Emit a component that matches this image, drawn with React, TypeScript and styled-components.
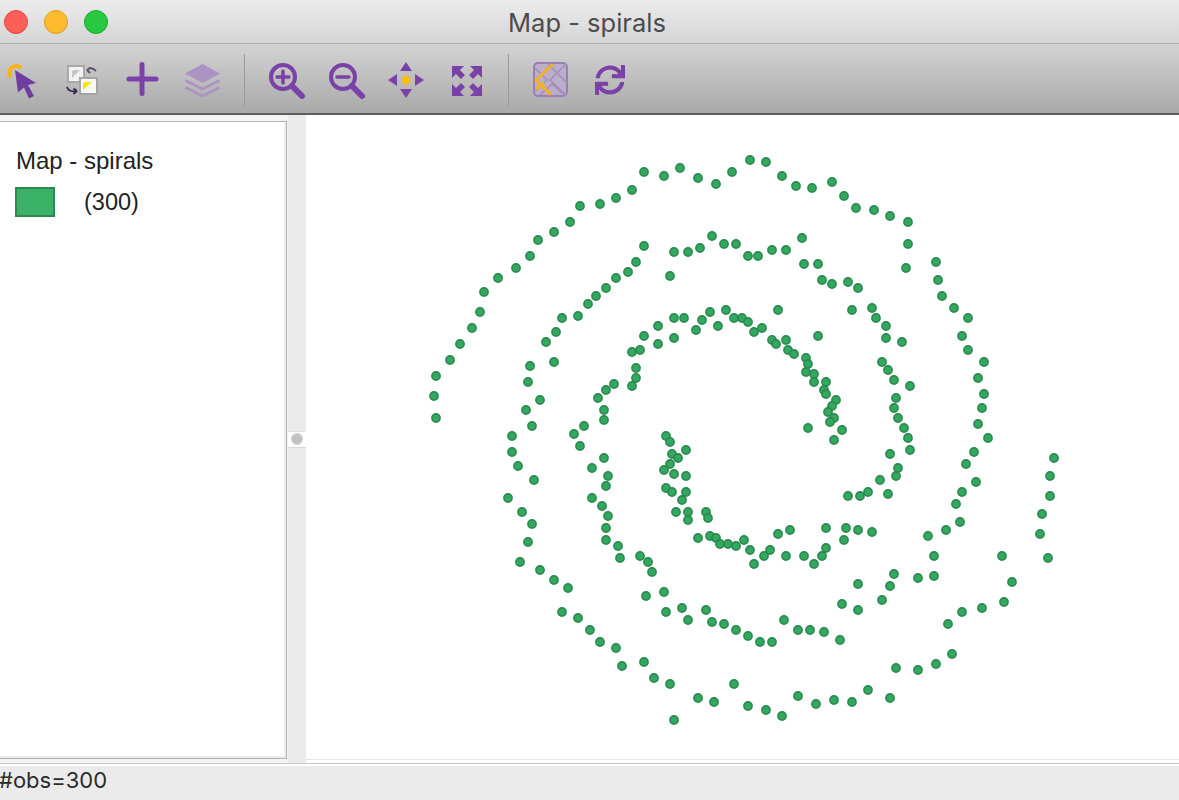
import React from "react";
import styled, { createGlobalStyle } from "styled-components";
import { FaSync } from "react-icons/fa";

const PURPLE = "#7a42a8";

const GlobalStyle = createGlobalStyle`
  html, body {
    margin: 0;
    padding: 0;
    background: #fff;
    overflow: hidden;
  }
`;

const Window = styled.div`
  width: 1179px;
  height: 800px;
  display: flex;
  flex-direction: column;
  overflow: hidden;
  font-family: "Liberation Sans", Arial, sans-serif;
`;

const TitleBar = styled.div`
  height: 44px;
  flex: none;
  position: relative;
  display: flex;
  align-items: center;
  justify-content: center;
  padding: 1px 5px 0 0;
  box-sizing: border-box;
  background: linear-gradient(#ececec, #d5d5d5);
  border-bottom: 1px solid #b1b1b1;
`;

const Lights = styled.div`
  position: absolute;
  left: 4px;
  top: 10px;
  display: flex;
  gap: 16px;
`;

const Light = styled.span<{ $fill: string; $edge: string }>`
  width: 24px;
  height: 24px;
  box-sizing: border-box;
  border-radius: 50%;
  background: ${(p) => p.$fill};
  border: 1px solid ${(p) => p.$edge};
`;

const Title = styled.div`
  font-family: "Inter", "Liberation Sans", sans-serif;
  font-size: 25.5px;
  color: #4c4c4c;
`;

const Toolbar = styled.div`
  height: 71px;
  flex: none;
  box-sizing: border-box;
  display: flex;
  align-items: center;
  padding-top: 3px;
  background: linear-gradient(#d3d3d3, #a9a9a9);
  border-bottom: 2px solid #5c5c5c;
`;

const ToolButton = styled.div`
  width: 60px;
  height: 48px;
  flex: none;
  display: flex;
  align-items: center;
  justify-content: center;
  &:first-child {
    margin-left: -8px;
  }
`;

const ToolSeparator = styled.div`
  width: 24px;
  height: 52px;
  flex: none;
  box-sizing: border-box;
  padding-left: 1px;
  display: flex;
  justify-content: center;
  &::before {
    content: "";
    width: 1.5px;
    background: #9a9a9a;
  }
`;

const Body = styled.div`
  height: 648px;
  flex: none;
  display: flex;
`;

const LegendPane = styled.div`
  width: 288px;
  flex: none;
  box-sizing: border-box;
  padding: 6px 1px 4px 0;
  background: #f4f4f4;
`;

const LegendBox = styled.div`
  height: 100%;
  box-sizing: border-box;
  margin-left: -2px;
  padding: 25px 0 0 17px;
  background: #fff;
  border: 1px solid #b2b2b2;
  box-shadow: inset -2px -2px 0 #ececec;
`;

const LegendTitle = styled.div`
  font-size: 24px;
  line-height: 28px;
  color: #222;
`;

const LegendRow = styled.div`
  display: flex;
  align-items: center;
  gap: 29px;
  margin-top: 12px;
  margin-left: -1px;
  font-size: 23.5px;
  color: #222;
`;

const Swatch = styled.span`
  width: 40px;
  height: 30px;
  box-sizing: border-box;
  background: #3bb067;
  border: 2px solid #2a8a50;
`;

const Sash = styled.div`
  width: 18px;
  flex: none;
  display: flex;
  align-items: center;
  background: #ebebeb;
`;

const SashGrip = styled.div`
  width: 100%;
  height: 17px;
  box-sizing: border-box;
  display: flex;
  align-items: center;
  justify-content: center;
  background: #fff;
  border-top: 1px solid #e2e2e2;
  border-bottom: 1px solid #d8d8d8;
  &::before {
    content: "";
    width: 12px;
    height: 12px;
    border-radius: 50%;
    background: #c2c2c2;
    border: 1px solid #d4d4d4;
    box-sizing: border-box;
  }
`;

const Canvas = styled.div`
  flex: 1;
  background: #fff;
  border-bottom: 3px solid #fff;
  box-shadow: inset 0 -4px 0 -3px #e6e6e6;
`;

const MapSvg = styled.svg`
  display: block;
  width: 873px;
  height: 645px;
`;

const StatusBar = styled.div`
  flex: 1;
  box-sizing: border-box;
  padding: 0 0 4px 0;
  display: flex;
  align-items: center;
  background: #ebebeb;
  border-top: 1px solid #c9c9c9;
  box-shadow: inset 0 2px 0 #fff;
  font-family: "Inter", "Liberation Sans", sans-serif;
  font-size: 22px;
  color: #2b2b2b;
  text-indent: -1px;
`;

const points: [number, number][] = [
  // outer arm
  [436, 376], [434, 396], [436, 418], [450, 360], [460, 344], [472, 328], [480, 312], [484, 292],
  [498, 278], [516, 268], [530, 256], [538, 240], [554, 232], [570, 222], [580, 206], [600, 204],
  [616, 198], [632, 190], [644, 172], [664, 176], [680, 168], [698, 178], [716, 184], [732, 172],
  [750, 160], [766, 162], [782, 176], [796, 186], [812, 188], [832, 182], [844, 196], [856, 208],
  [874, 210], [890, 216], [908, 222], [908, 244], [906, 268], [936, 262], [938, 280], [942, 296],
  [954, 308], [968, 318], [962, 336], [968, 350], [984, 362], [978, 378], [984, 394], [982, 408],
  [978, 424], [988, 438], [974, 452], [966, 464], [976, 482], [962, 492], [956, 504], [960, 522],
  [946, 530], [928, 536], [934, 556], [934, 576], [918, 578], [894, 574], [890, 586], [882, 600],
  [858, 584], [858, 610], [842, 604],
  // far right and bottom arm
  [1054, 458], [1050, 476], [1050, 496], [1042, 514], [1040, 534], [1048, 558], [1002, 556],
  [1012, 582], [1004, 602], [982, 608], [962, 612], [948, 624], [952, 654], [936, 664], [918, 670],
  [896, 668], [868, 690], [890, 698], [852, 702], [834, 700], [816, 704], [798, 696], [782, 716],
  [766, 710], [748, 706], [734, 684], [714, 702], [698, 698], [674, 720], [670, 684], [654, 678],
  [644, 662], [622, 666], [616, 648], [600, 642], [590, 630], [578, 618], [562, 612],
  // second arm
  [644, 246], [636, 262], [628, 272], [616, 278], [606, 288], [596, 296], [588, 304], [578, 316],
  [562, 318], [556, 332], [546, 342], [554, 362], [530, 366], [528, 382], [540, 400], [526, 410],
  [532, 426], [512, 436], [512, 452], [518, 466], [534, 480], [508, 498], [522, 512], [532, 524],
  [528, 542], [520, 562], [540, 570], [554, 580], [568, 588],
  [670, 276], [674, 252], [688, 252], [700, 248], [712, 236], [724, 244], [736, 244], [748, 256],
  [758, 256], [772, 250], [786, 250], [802, 238], [804, 264], [818, 264], [822, 280], [832, 284],
  [848, 282], [858, 288], [852, 310], [872, 308], [876, 318], [886, 326], [886, 338], [902, 342],
  [882, 362], [888, 370], [894, 380], [910, 386], [896, 398], [894, 408], [898, 418], [904, 428],
  [908, 438], [910, 450], [890, 454], [898, 468], [896, 476], [880, 480], [868, 492], [860, 496],
  [848, 496], [888, 494],
  // third arm
  [632, 352], [640, 350], [636, 368], [636, 378], [632, 386], [614, 384], [606, 390], [598, 398],
  [604, 410], [604, 420], [584, 426], [574, 434], [580, 446], [604, 458], [592, 468], [608, 476],
  [606, 486], [592, 498], [602, 506], [608, 516], [606, 528], [606, 540], [618, 546], [620, 558],
  [640, 556], [648, 562], [652, 572], [664, 592], [646, 596], [666, 612], [682, 608], [688, 620],
  [706, 610], [712, 622], [724, 624], [736, 630], [748, 636], [760, 642], [772, 642], [784, 620],
  [798, 630], [810, 630], [824, 632], [840, 640],
  [674, 318], [684, 318], [658, 326], [644, 336], [674, 338], [658, 344], [696, 330], [702, 320],
  [710, 312], [718, 326], [726, 310], [734, 318], [742, 318], [748, 322], [754, 332], [762, 328],
  [778, 310], [772, 340], [776, 344], [786, 340], [788, 350], [794, 354], [818, 336], [806, 358],
  [808, 364], [806, 372], [814, 374], [814, 382], [826, 382], [824, 390], [826, 394], [836, 400],
  [832, 406], [828, 412], [834, 418], [830, 422], [808, 428], [842, 430], [834, 440],
  // centre hook
  [666, 436], [670, 442], [686, 450], [672, 454], [678, 458], [670, 464], [664, 470], [674, 474],
  [686, 476], [666, 488], [672, 492], [686, 492], [682, 500], [676, 512], [688, 512], [688, 520],
  [706, 512], [708, 518], [698, 538], [710, 536], [716, 538], [720, 544], [728, 544], [736, 546],
  [744, 540], [750, 550], [754, 564], [764, 556], [770, 550], [778, 534], [790, 530], [786, 556],
  [804, 556], [814, 564], [822, 556], [826, 548], [826, 528], [846, 528], [844, 540], [858, 530],
  [872, 532],
];

function SelectIcon() {
  return (
    <svg width="48" height="48" viewBox="0 0 48 48">
      <path d="M12 20a7 7 0 0 1 10-9" fill="none" stroke="#f4b41a" strokeWidth="4" strokeLinecap="round" />
      <path d="M17 14l21 13-8 2 6 11-5 2.500-5-11-6 5z" fill="#6f3c9f" />
    </svg>
  );
}

function SwapIcon() {
  return (
    <svg width="48" height="48" viewBox="0 0 48 48">
      <rect x="10" y="10" width="16" height="16" fill="#f2f2f2" stroke="#a8a8a8" strokeWidth="2" />
      <path d="M14 22v-6q0-2 2-2h6z" fill="#c6c6c6" />
      <rect x="22" y="22" width="17" height="16" fill="#f6f6f6" stroke="#a4a4a4" strokeWidth="2" />
      <path d="M25 34v-6q0-2 2-2h7z" fill="#f4e800" />
      <path d="M29 14c3-3 6-2 9 1M29 14l3.500-2.500M29 14l3 3" fill="none" stroke="#5d4a72" strokeWidth="1.800" />
      <path d="M9 31c1 3 4 5 9 4M19 35l-3.500-2.500M19 35l-3.500 3" fill="none" stroke="#33284a" strokeWidth="1.800" />
    </svg>
  );
}

function PlusIcon() {
  return (
    <svg width="48" height="48" viewBox="0 0 48 48">
      <path d="M11 23h27M24 8.500v29" stroke={PURPLE} strokeWidth="5" strokeLinecap="round" fill="none" />
    </svg>
  );
}

function LayersIcon() {
  const fade = "#ab94c3";
  return (
    <svg width="48" height="48" viewBox="0 0 48 48">
      <path d="M24.500 8l17.500 9.500-17.500 9.500L7 17.500z" fill={fade} />
      <path d="M7.500 24.500l17 8.500 17-8.500M7.500 31.500l17 8.500 17-8.500" fill="none" stroke={fade} strokeWidth="2.800" />
    </svg>
  );
}

function ZoomIcon({ plus }: { plus?: boolean }) {
  return (
    <svg width="48" height="48" viewBox="0 0 48 48">
      <circle cx="21" cy="21" r="12" fill="none" stroke={PURPLE} strokeWidth="4" />
      <path d="M30 30l10 10" stroke={PURPLE} strokeWidth="6" strokeLinecap="round" />
      <path d={plus ? "M15 21h12M21 15v12" : "M15 21h12"} stroke={PURPLE} strokeWidth="3.500" strokeLinecap="round" />
    </svg>
  );
}

function PanIcon() {
  return (
    <svg width="48" height="48" viewBox="0 0 48 48">
      <path d="M24 6l6 9H18zM24 42l-6-9h12zM6 24l9-6v12zM42 24l-9 6V18z" fill={PURPLE} />
      <circle cx="24" cy="24" r="4.500" fill="#f7bd0f" />
    </svg>
  );
}

function FitIcon() {
  const arm = "M0 0h12l-4 4 5 5-4 4-5-5-4 4z";
  return (
    <svg width="48" height="48" viewBox="0 0 48 48">
      <g fill={PURPLE}>
        <path d={arm} transform="translate(10 10)" />
        <path d={arm} transform="translate(40 10) scale(-1 1)" />
        <path d={arm} transform="translate(10 40) scale(1 -1)" />
        <path d={arm} transform="translate(40 40) scale(-1 -1)" />
      </g>
    </svg>
  );
}

function BasemapIcon() {
  return (
    <svg width="48" height="48" viewBox="0 0 48 48">
      <rect x="8" y="7" width="33" height="33" rx="4" fill="#bbaec8" stroke="#9a7fb6" strokeWidth="2" />
      <path d="M9 12l12 12L9 35M22 8l19 19M40 8L24 24l16 15M14 39l12-11 12 11" fill="none" stroke="#a68fbf" strokeWidth="1.600" />
      <path d="M27 8L10 24l15 15M10 33l8-6" fill="none" stroke="#f2b21f" strokeWidth="3" />
    </svg>
  );
}

export default function App() {
  return (
    <Window>
      <GlobalStyle />
      <TitleBar>
        <Lights>
          <Light $fill="#ff5f57" $edge="#e2463f" />
          <Light $fill="#febc2e" $edge="#e1a116" />
          <Light $fill="#28c840" $edge="#1aab29" />
        </Lights>
        <Title>Map - spirals</Title>
      </TitleBar>
      <Toolbar>
        <ToolButton><SelectIcon /></ToolButton>
        <ToolButton><SwapIcon /></ToolButton>
        <ToolButton><PlusIcon /></ToolButton>
        <ToolButton><LayersIcon /></ToolButton>
        <ToolSeparator />
        <ToolButton><ZoomIcon plus /></ToolButton>
        <ToolButton><ZoomIcon /></ToolButton>
        <ToolButton><PanIcon /></ToolButton>
        <ToolButton><FitIcon /></ToolButton>
        <ToolSeparator />
        <ToolButton><BasemapIcon /></ToolButton>
        <ToolButton><FaSync size={30} color={PURPLE} /></ToolButton>
      </Toolbar>
      <Body>
        <LegendPane>
          <LegendBox>
            <LegendTitle>Map - spirals</LegendTitle>
            <LegendRow>
              <Swatch />
              <span>(300)</span>
            </LegendRow>
          </LegendBox>
        </LegendPane>
        <Sash>
          <SashGrip />
        </Sash>
        <Canvas>
          <MapSvg viewBox="306 115 873 645">
            {points.map(([x, y], i) => (
              <circle key={i} cx={x} cy={y} r="4.100" fill="#33a95f" stroke="#2a8a50" strokeWidth="1.600" />
            ))}
          </MapSvg>
        </Canvas>
      </Body>
      <StatusBar>#obs=300</StatusBar>
    </Window>
  );
}
